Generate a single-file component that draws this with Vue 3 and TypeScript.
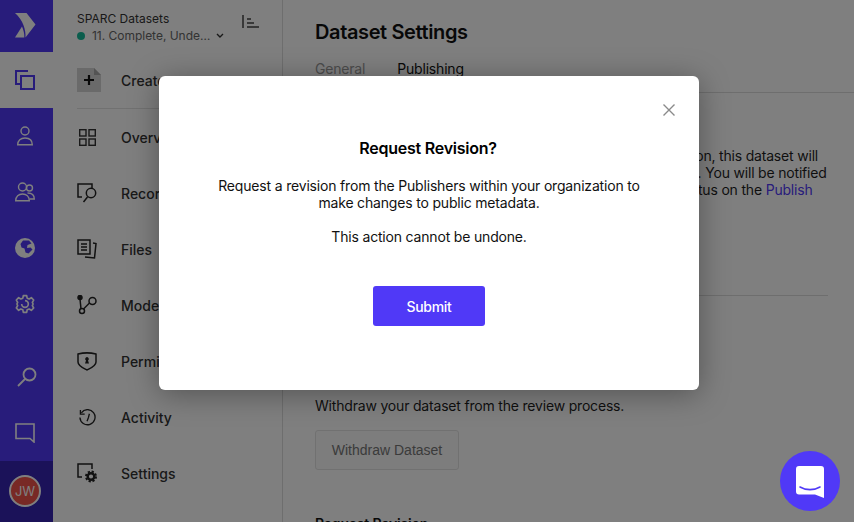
<script setup lang="ts">
const publishText: string[] = [
  'When you submit your dataset for review and also publication, this dataset will',
  'be blocked and reviewed by Publishers in your organization. You will be notified',
  'when your request is approved, and you may review the status on the ',
]
</script>

<template>
  <div class="app">
    <aside class="rail">
      <div class="rail-logo">
        <svg width="23" height="27" viewBox="0 0 23 27">
          <path d="M1 1H12.500L21.500 12.500L11.500 25.500C12 18 9 8 1 1z" fill="#fff" />
          <path d="M1 25.500L8 14.500C9.500 18 10.500 22 10.300 25.500z" fill="#fff" />
        </svg>
      </div>
      <div class="rail-item active">
        <svg width="20" height="20" viewBox="0 0 20 20" fill="none" stroke="#5039f7" stroke-width="2">
          <path d="M13 1H1v13h4" />
          <rect x="6" y="6" width="13" height="13" />
        </svg>
      </div>
      <div class="rail-item">
        <svg width="16" height="20" viewBox="0 0 16 20" fill="none" stroke="#fff" stroke-width="1.400">
          <circle cx="8" cy="5" r="4" />
          <path d="M.7 18.800c0-4.500 3-6.800 7.300-6.800s7.300 2.300 7.300 6.800z" />
        </svg>
      </div>
      <div class="rail-item">
        <svg width="20" height="20" viewBox="0 0 20 20" fill="none" stroke="#fff" stroke-width="1.400">
          <circle cx="7.500" cy="5" r="4" />
          <circle cx="14.500" cy="6" r="3" />
          <path d="M.7 18.800c0-4.500 3-6.800 6.800-6.800s6.800 2.300 6.800 6.800z" />
          <path d="M12.500 11c4 0 6.800 2 6.800 6h-4.500" />
        </svg>
      </div>
      <div class="rail-item">
        <svg width="20" height="20" viewBox="0 0 20 20">
          <circle cx="10" cy="10" r="10" fill="#fff" />
          <path d="M8 2.500l6 0 2.500 3-4 1.500-.5 3 3.500-.5 2 2-4 4-3-1-1-4-3-1-1-3.500z" fill="#5039f7" />
        </svg>
      </div>
      <div class="rail-item">
        <svg width="20" height="20" viewBox="0 0 24 24" fill="none" stroke="#fff" stroke-width="2" stroke-linejoin="round">
          <path d="M10 2h4l.6 3 2.400 1 2.600-1.600 2.800 2.800L20.800 10l.9 2-.9 2 1.600 2.800-2.800 2.800-2.600-1.600-2.400 1-.6 3h-4l-.6-3-2.400-1-2.600 1.600-2.800-2.800L3.200 14l-.9-2 .9-2-1.600-2.800 2.800-2.800L7 6l2.400-1z" />
          <path d="M8 12a4 4 0 1 0 4-4" />
        </svg>
      </div>
      <div class="rail-spacer"></div>
      <div class="rail-item">
        <svg class="search" width="20" height="20" viewBox="0 0 20 20" fill="none" stroke="#fff" stroke-width="1.800">
          <circle cx="12.500" cy="7.500" r="6" />
          <path d="M8 12L1 19" />
        </svg>
      </div>
      <div class="rail-item">
        <svg width="20" height="20" viewBox="0 0 20 20" fill="none" stroke="#fff" stroke-width="1.600">
          <path d="M1 1h18v18l-4-3.500H1z" />
        </svg>
      </div>
      <div class="rail-user"><span class="avatar">JW</span></div>
    </aside>

    <nav class="side">
      <header class="side-head">
        <div class="side-titles">
          <div class="org">SPARC Datasets</div>
          <div class="status"><i class="dot"></i><span class="status-text">11. Complete, Unde…</span>
            <svg width="8" height="6" viewBox="0 0 8 6" fill="none" stroke="#333" stroke-width="1.400"><path d="M1 1l3 3 3-3" /></svg>
          </div>
        </div>
        <svg class="collapse" width="17" height="13" viewBox="0 0 17 13" fill="none" stroke="#444" stroke-width="1.500">
          <path d="M1 0v13M5 4h4M5 8h7M5 12h12" />
        </svg>
      </header>

      <div class="side-item create">
        <svg width="24" height="24" viewBox="0 0 24 24">
          <path d="M0 0h17l7 7v17H0z" fill="#d4d4d4" />
          <path d="M17 0l7 7h-7z" fill="#a8a8a8" />
          <path d="M12 7v10M7 12h10" stroke="#111" stroke-width="2.200" />
        </svg>
        <span>Create</span>
      </div>

      <div class="side-item">
        <svg class="inset" width="17" height="17" viewBox="0 0 17 17" fill="none" stroke="#333" stroke-width="1.400">
          <rect x=".7" y=".7" width="6.300" height="6.300" /><rect x="10" y=".7" width="6.300" height="6.300" />
          <rect x=".7" y="10" width="6.300" height="6.300" /><rect x="10" y="10" width="6.300" height="6.300" />
        </svg>
        <span>Overview</span>
      </div>
      <div class="side-item">
        <svg width="20" height="20" viewBox="0 0 20 20" fill="none" stroke="#222" stroke-width="1.500">
          <path d="M5 14H1V1h14v4" />
          <circle cx="14" cy="10" r="4.700" />
          <path d="M10.500 14l-4 5" />
        </svg>
        <span>Records</span>
      </div>
      <div class="side-item">
        <svg width="20" height="20" viewBox="0 0 20 20" fill="none" stroke="#222" stroke-width="1.500">
          <path d="M1 1h12v14H1zM4 5h6M4 8h6M4 11h6" />
          <path d="M16 4l3 .5-1.500 14.500L8 18" />
        </svg>
        <span>Files</span>
      </div>
      <div class="side-item">
        <svg width="20" height="20" viewBox="0 0 20 20" fill="none" stroke="#222" stroke-width="1.500">
          <circle cx="3" cy="2.500" r="2" fill="#222" />
          <path d="M3 4l1 10" />
          <circle cx="5" cy="16" r="2.500" />
          <circle cx="15.500" cy="6" r="3.500" />
          <path d="M6.500 14l6-6" />
        </svg>
        <span>Models</span>
      </div>
      <div class="side-item">
        <svg width="20" height="20" viewBox="0 0 20 20" fill="none" stroke="#222" stroke-width="1.500">
          <path d="M1 3c6-1.500 12-1.500 18 0v8c0 4-5 6-9 8-4-2-9-4-9-8z" />
          <path d="M10 6a2 2 0 0 1 1 3.600l1 2.900H8l1-2.900A2 2 0 0 1 10 6z" fill="#222" stroke="none" />
        </svg>
        <span>Permissions</span>
      </div>
      <div class="side-item">
        <svg class="inset" width="17" height="17" viewBox="0 0 18 18" fill="none" stroke="#222" stroke-width="1.400">
          <path d="M2.500 4A8 8 0 1 1 1 9" />
          <path d="M1.500 1v4.500H6" />
          <path d="M11 5l-1 4-1.500 4" />
        </svg>
        <span>Activity</span>
      </div>
      <div class="side-item">
        <svg width="20" height="20" viewBox="0 0 20 20" fill="none" stroke="#222" stroke-width="1.500">
          <path d="M5 14H1V1h14v5" />
          <circle cx="14" cy="13.500" r="3.300" stroke-width="2.400" />
          <circle cx="14" cy="13.500" r="5" stroke-width="2" stroke-dasharray="2.200 1.730" />
        </svg>
        <span>Settings</span>
      </div>
    </nav>

    <main class="main">
      <div class="main-head">
        <h1>Dataset Settings</h1>
        <div class="tabs"><span class="tab">General</span><span class="tab on">Publishing</span></div>
      </div>
      <div class="main-body">
        <section class="sec-first">
          <h2>Submit for Publication</h2>
          <p>
            <template v-for="line in publishText" :key="line">{{ line }}<br v-if="!line.endsWith(' ')" /></template><a>Publish</a>
          </p>
        </section>
        <section class="sec-withdraw">
          <h2>Withdraw from Publication</h2>
          <p>Withdraw your dataset from the review process.</p>
          <button class="ghost">Withdraw Dataset</button>
        </section>
        <section class="sec-rev"><h2>Request Revision</h2></section>
      </div>
    </main>

    <div class="overlay">
      <div class="modal" role="dialog">
        <button class="close" aria-label="Close">
          <svg width="12" height="12" viewBox="0 0 12 12" fill="none" stroke="#8a8a8a" stroke-width="1.400"><path d="M.5.5l11 11M11.500.5l-11 11" /></svg>
        </button>
        <h3>Request Revision?</h3>
        <p class="msg">Request a revision from the Publishers within your organization to<br />make changes to public metadata.</p>
        <p class="msg two">This action cannot be undone.</p>
        <button class="submit">Submit</button>
      </div>
    </div>

    <div class="bubble">
      <svg width="28" height="32" viewBox="0 0 28 32">
        <path d="M3 0h22a3 3 0 0 1 3 3v29l-9-3.500H3a3 3 0 0 1-3-3V3a3 3 0 0 1 3-3z" fill="#fff" />
        <path d="M4 21c6 3.500 14 3.500 20 0" fill="none" stroke="#5039f7" stroke-width="1.600" stroke-linecap="round" />
      </svg>
    </div>
  </div>
</template>

<style>
html, body { margin: 0; padding: 0; }
</style>

<style scoped>
.app {
  position: relative;
  display: flex;
  width: 854px;
  height: 522px;
  overflow: hidden;
  background: #fff;
  font-family: Inter, "Liberation Sans", sans-serif;
  font-size: 14px;
  color: #1f1f1f;
}
.rail {
  flex: 0 0 53px;
  display: flex;
  flex-direction: column;
  background: #5039f7;
}
.rail-logo { height: 52px; display: flex; align-items: center; justify-content: center; padding-right: 3px; box-sizing: border-box; }
.rail-item { height: 56px; display: flex; align-items: center; justify-content: center; flex: none; padding-right: 3px; box-sizing: border-box; }
.rail-item.active { background: #fff; }
.rail-spacer { height: 17px; flex: none; }
.search { margin-left: 4px; }
.rail-user {
  margin-top: auto;
  height: 62px;
  background: #3624b2;
  display: flex;
  align-items: center;
  justify-content: center;
  padding-right: 3px;
  box-sizing: border-box;
}
.avatar {
  width: 32px;
  height: 32px;
  box-sizing: border-box;
  border-radius: 50%;
  border: 2px solid #fff;
  background: #f0524a;
  color: #fff;
  font-size: 13px;
  display: flex;
  align-items: center;
  justify-content: center;
}
.side {
  flex: 0 0 230px;
  box-sizing: border-box;
  border-right: 1px solid #dcdcdc;
  padding-left: 24px;
  padding-right: 24px;
}
.side-head { height: 52px; display: flex; align-items: flex-start; justify-content: space-between; padding-top: 11px; box-sizing: border-box; }
.org { font-size: 12px; line-height: 15px; color: #333; }
.status { display: flex; align-items: center; font-size: 12px; line-height: 15px; margin-top: 2px; color: #666; }
.dot { width: 8px; height: 8px; border-radius: 50%; background: #17bb9b; margin-right: 7px; }
.status-text { margin-right: 6px; letter-spacing: -.02px; }
.collapse { margin-top: 4px; margin-right: -1px; }
.side-item {
  height: 56px;
  display: flex;
  align-items: center;
  color: #333;
  font-weight: 500;
  position: relative;
}
.side-item svg { flex: none; position: absolute; left: 0; }
.side-item svg.inset { left: 2px; }
.side-item span { margin-left: 44px; }
.create { border-bottom: 1px solid #e2e2e2; box-sizing: border-box; height: 57px; }
.main { flex: 1; min-width: 0; letter-spacing: -.19px; }
.main-head { height: 93px; box-sizing: border-box; border-bottom: 1px solid #dcdcdc; padding: 20px 0 0 32px; }
h1 { margin: 0; font-size: 20px; line-height: 24px; font-weight: 600; color: #111; letter-spacing: -.38px; }
.tabs { display: flex; gap: 32px; margin-top: 16px; font-size: 14px; line-height: 17px; }
.tab { color: #999; }
.tab.on { color: #111; }
.main-body { padding: 0 26px 0 32px; }
h2 { margin: 0; font-size: 14px; line-height: 17px; font-weight: 600; color: #111; }
p { margin: 0; }
.sec-first { padding: 21px 0 97px; border-bottom: 1px solid #dcdcdc; line-height: 17px; }
.sec-first p { margin-top: 16px; white-space: nowrap; }
.sec-first a { color: #5039f7; }
.sec-withdraw { padding-top: 74px; }
.sec-withdraw p { margin-top: 10px; line-height: 17px; }
.ghost {
  margin-top: 16px;
  width: 144px;
  height: 40px;
  background: #fafafa;
  border: 1px solid #e2e2e2;
  border-radius: 3px;
  color: #777;
  font-family: "Liberation Sans", sans-serif;
  font-size: 14px;
}
.sec-rev { padding-top: 45px; }
.overlay {
  position: absolute;
  inset: 0;
  background: rgba(0, 0, 0, .5);
}
.modal {
  position: absolute;
  left: 159px;
  top: 76px;
  width: 540px;
  height: 314px;
  box-sizing: border-box;
  padding-top: 63px;
  background: #fff;
  border-radius: 6px;
  box-shadow: 0 4px 30px rgba(0, 0, 0, .35);
  text-align: center;
  letter-spacing: -.18px;
}
.close {
  position: absolute;
  top: 28px;
  right: 24px;
  padding: 0;
  border: 0;
  background: none;
  display: flex;
}
h3 { margin: 0; padding-right: 2px; font-size: 16px; line-height: 18px; font-weight: 600; color: #000; letter-spacing: -.23px; }
.msg { line-height: 17px; margin-top: 20px; color: #111; }
.msg.two { margin-top: 17px; }
.submit {
  display: block;
  margin: 41px auto 0;
  width: 112px;
  height: 40px;
  border: 0;
  border-radius: 3px;
  background: #5039f7;
  color: #fff;
  font: inherit;
  font-weight: 500;
  letter-spacing: -.3px;
}
.bubble {
  position: absolute;
  left: 780px;
  top: 451px;
  width: 60px;
  height: 60px;
  border-radius: 50%;
  background: #5039f7;
  display: flex;
  align-items: center;
  justify-content: center;
  padding-top: 2px;
  box-sizing: border-box;
}
</style>
